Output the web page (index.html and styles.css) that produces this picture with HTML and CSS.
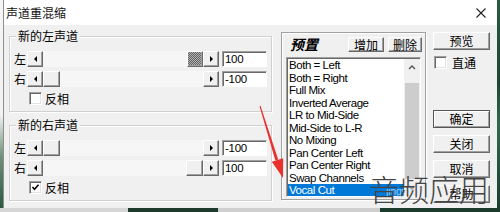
FILE: index.html
```html
<!DOCTYPE html>
<html lang="zh-CN">
<head>
<meta charset="utf-8">
<title>声道重混缩</title>
<link rel="stylesheet" href="styles.css">
</head>
<body>
<div class="screen">
  <div class="main">
    <div class="edge-left"></div>
    <div class="dialog">
      <div class="titlebar">
        <span class="title">声道重混缩</span>
        <svg class="close" viewBox="0 0 10 10"><path d="M0.5 0.5 L9.5 9.5 M9.5 0.5 L0.5 9.5" stroke="#222" stroke-width="1.1" fill="none"/></svg>
      </div>
      <div class="client">
        <div class="left-col">
          <div class="group">
            <span class="group-title">新的左声道</span>
            <div class="srow">
              <span class="chan">左</span>
              <div class="hscroll">
                <span class="sbtn"><i class="tri-l"></i></span>
                <span class="track at-max"><span class="thumb focused"></span></span>
                <span class="sbtn"><i class="tri-r"></i></span>
              </div>
              <span class="numbox">100</span>
            </div>
            <div class="srow">
              <span class="chan">右</span>
              <div class="hscroll">
                <span class="sbtn"><i class="tri-l"></i></span>
                <span class="track"><span class="thumb"></span></span>
                <span class="sbtn"><i class="tri-r"></i></span>
              </div>
              <span class="numbox">-100</span>
            </div>
            <div class="check invert"><span class="box"></span><span class="check-label">反相</span></div>
          </div>
          <div class="group">
            <span class="group-title">新的右声道</span>
            <div class="srow">
              <span class="chan">左</span>
              <div class="hscroll">
                <span class="sbtn"><i class="tri-l"></i></span>
                <span class="track"><span class="thumb"></span></span>
                <span class="sbtn"><i class="tri-r"></i></span>
              </div>
              <span class="numbox">-100</span>
            </div>
            <div class="srow">
              <span class="chan">右</span>
              <div class="hscroll">
                <span class="sbtn"><i class="tri-l"></i></span>
                <span class="track at-max"><span class="thumb"></span></span>
                <span class="sbtn"><i class="tri-r"></i></span>
              </div>
              <span class="numbox">100</span>
            </div>
            <div class="check invert"><span class="box"><svg class="tick" viewBox="0 0 9 9"><path d="M1.5 4 L3.5 6.2 L7.5 1.8" stroke="#000" stroke-width="1.6" fill="none"/></svg></span><span class="check-label">反相</span></div>
          </div>
        </div>

        <div class="presets">
          <div class="preset-head">
            <span class="preset-title">预置</span>
            <span class="pbtn add">增加</span>
            <span class="pbtn del">删除</span>
          </div>
          <div class="listbox">
            <div class="items">
              <div class="item">Both = Left</div>
              <div class="item">Both = Right</div>
              <div class="item">Full Mix</div>
              <div class="item">Inverted Average</div>
              <div class="item">LR to Mid-Side</div>
              <div class="item">Mid-Side to L-R</div>
              <div class="item">No Mixing</div>
              <div class="item">Pan Center Left</div>
              <div class="item">Pan Center Right</div>
              <div class="item">Swap Channels</div>
              <div class="item sel">Vocal Cut</div>
            </div>
            <div class="vscroll">
              <span class="vs-btn"><svg viewBox="0 0 8 5" class="chev"><path d="M1 4 L4 1 L7 4" stroke="#555" stroke-width="1.4" fill="none"/></svg></span>
              <span class="vs-gap"></span>
              <span class="vs-thumb"></span>
              <span class="vs-btn"><svg viewBox="0 0 8 5" class="chev"><path d="M1 1 L4 4 L7 1" stroke="#999" stroke-width="1.4" fill="none"/></svg></span>
            </div>
          </div>
        </div>

        <div class="right-col">
          <span class="btn">预览</span>
          <div class="check direct"><span class="box"></span><span class="check-label">直通</span></div>
          <span class="btn ok default">确定</span>
          <span class="btn">关闭</span>
          <span class="btn">取消</span>
          <span class="btn">帮助</span>
        </div>
      </div>
    </div>
    <div class="edge-right"></div>
  </div>
  <div class="bottom"></div>

  <svg class="arrow" viewBox="0 0 500 212">
    <polygon points="260.5,105.8 259.5,106.2 275.4,160.5 278.2,159.5" fill="#e8302c"/>
    <polygon points="283,178 271.8,161.8 283.2,158.2" fill="#e8302c"/>
  </svg>
  <span class="jingyan">jingyan</span>
  <span class="watermark">音频应用</span>
</div>
</body>
</html>
```

FILE: styles.css
```css
* { box-sizing: border-box; }
body { margin: 0; }

.screen {
  position: relative;
  width: 500px;
  height: 212px;
  overflow: hidden;
  font-family: "Noto Sans CJK SC", sans-serif;
  font-size: 12px;
  color: #000;
  background: #e8e8e8;
}

.main { display: flex; height: 208px; }

.edge-left {
  width: 3px;
  background: linear-gradient(#f5f5f5 0, #f3f3f3 55%, #6f9279 75%, #2b5940 100%);
}
.edge-right {
  width: 3px;
  background: linear-gradient(#2a5a44 0, #1d4535 40%, #2f6a50 60%, #1a3d2f 100%);
}

.dialog {
  width: 494px;
  display: flex;
  flex-direction: column;
  border-left: 1px solid #8e8e8e;
  background: #f0f0f0;
}

.titlebar {
  height: 25px;
  flex: none;
  background: #fff;
  display: flex;
  align-items: center;
  padding-left: 2px;
}
.title { font-size: 12px; line-height: 14px; color: #111; }
.close { margin-left: auto; margin-right: 11px; width: 10px; height: 10px; }

.client {
  flex: 1;
  display: flex;
  align-items: flex-start;
  padding-left: 5px;
}

/* left column */
.left-col { width: 263px; display: flex; flex-direction: column; }

.group {
  position: relative;
  margin-top: 11px;
  height: 76px;
  border: 1px solid #d0d0d0;
  box-shadow: inset 1px 1px 0 #fff, 1px 1px 0 #fff;
  padding: 14px 3px 0 4px;
  display: flex;
  flex-direction: column;
  gap: 4px;
}
.group + .group { margin-top: 13px; }

.group-title {
  position: absolute;
  top: -8px;
  left: 6px;
  padding: 0 2px;
  background: #f0f0f0;
  line-height: 14px;
}

.srow { display: flex; align-items: center; height: 16px; }
.chan { width: 13px; line-height: 14px; }

.hscroll { width: 192px; height: 16px; display: flex; flex: none; }

.sbtn, .thumb {
  width: 16px;
  height: 16px;
  flex: none;
  display: flex;
  align-items: center;
  justify-content: center;
  background: #f0f0f0;
  border-top: 1px solid #fff;
  border-left: 1px solid #fff;
  border-right: 1px solid #696969;
  border-bottom: 1px solid #696969;
  box-shadow: inset -1px -1px 0 #a0a0a0;
}
.thumb { width: 17px; }
.thumb.focused {
  width: 16px;
  background: repeating-conic-gradient(#606060 0 25%, #b4b4b4 0 50%) 0 0 / 2px 2px;
}

.tri-l, .tri-r { display: block; width: 0; height: 0; border-top: 3px solid transparent; border-bottom: 3px solid transparent; }
.tri-l { border-right: 3px solid #000; }
.tri-r { border-left: 3px solid #000; }

.track { flex: 1; display: flex; background: #f6f6f6; }
.track.at-max { justify-content: flex-end; }

.numbox {
  margin-left: 3px;
  width: 45px;
  height: 16px;
  background: #fff;
  border-top: 1px solid #a0a0a0;
  border-left: 1px solid #a0a0a0;
  border-right: 1px solid #fff;
  border-bottom: 1px solid #fff;
  box-shadow: inset 1px 1px 0 #696969;
  font-family: "Liberation Sans", sans-serif;
  font-size: 11.5px;
  letter-spacing: -0.3px;
  line-height: 14px;
  padding-left: 2px;
}

.check { display: flex; align-items: center; height: 13px; }
.check.invert { margin: 1px 0 0 15px; gap: 3px; }
.check.direct { margin: 6px 0 0 1px; gap: 5px; }
.check-label { line-height: 14px; }

.box {
  width: 13px;
  height: 13px;
  flex: none;
  background: #fff;
  border-top: 1px solid #a0a0a0;
  border-left: 1px solid #a0a0a0;
  border-right: 1px solid #fff;
  border-bottom: 1px solid #fff;
  box-shadow: inset 1px 1px 0 #696969, inset -1px -1px 0 #e3e3e3;
  display: flex;
  align-items: center;
  justify-content: center;
}
.tick { width: 9px; height: 9px; }

/* presets */
.presets {
  margin-left: 9px;
  margin-top: 7px;
  width: 145px;
  height: 168px;
  border: 1px solid #a0a0a0;
  box-shadow: inset 1px 1px 0 #fff, 1px 1px 0 #fff;
  padding: 4px 3px 0 4px;
  display: flex;
  flex-direction: column;
}
.preset-head { display: flex; align-items: center; height: 15px; gap: 4px; }
.preset-title {
  margin-left: 4px;
  margin-right: auto;
  font-weight: 700;
  font-style: italic;
  font-size: 14px;
  line-height: 15px;
}
.pbtn {
  height: 15px;
  display: flex;
  align-items: center;
  justify-content: center;
  line-height: 13px;
  background: #f0f0f0;
  border-top: 1px solid #fff;
  border-left: 1px solid #fff;
  border-right: 1px solid #696969;
  border-bottom: 1px solid #696969;
  box-shadow: inset -1px -1px 0 #a0a0a0;
}
.pbtn.add { width: 36px; }
.pbtn.del { width: 34px; }

.listbox {
  margin-top: 5px;
  width: 135px;
  height: 140px;
  display: flex;
  background: #fff;
  border-top: 1px solid #a0a0a0;
  border-left: 1px solid #a0a0a0;
  border-right: 1px solid #fff;
  border-bottom: 1px solid #fff;
  box-shadow: inset 1px 1px 0 #696969;
  padding: 1px 0 0 1px;
}
.items {
  flex: 1;
  overflow: hidden;
  font-family: "Liberation Sans", sans-serif;
  font-size: 11.5px;
  letter-spacing: -0.45px;
}
.item { height: 12.5px; line-height: 12.5px; padding-left: 1px; white-space: nowrap; }
.item.sel { background: #0078d7; color: #fff; }

.vscroll { width: 16px; flex: none; display: flex; flex-direction: column; background: #f0f0f0; }
.vs-btn { height: 17px; flex: none; display: flex; align-items: center; justify-content: center; }
.chev { width: 8px; height: 5px; }
.vs-gap { height: 7px; flex: none; }
.vs-thumb { flex: 1; margin: 0 1px; background: #cdcdcd; }

/* right column */
.right-col { margin-left: 7px; margin-top: 7px; width: 57px; display: flex; flex-direction: column; }
.btn {
  height: 18px;
  display: flex;
  align-items: center;
  justify-content: center;
  line-height: 14px;
  background: #f0f0f0;
  border-top: 1px solid #fff;
  border-left: 1px solid #fff;
  border-right: 1px solid #696969;
  border-bottom: 1px solid #696969;
  box-shadow: inset -1px -1px 0 #a0a0a0;
}
.btn + .btn { margin-top: 7px; }
.btn.ok { margin-top: 41px; }
.btn.default {
  border: 1px solid #555;
  box-shadow: inset 1px 1px 0 #fff, inset -1px -1px 0 #a0a0a0;
}

.bottom {
  height: 4px;
  background: linear-gradient(90deg, #d6d6d6 0 128px, #1d3a2c 128px 218px, #cfcfcf 218px 380px, #1c3b2d 380px 500px);
}

/* overlays */
.arrow { position: absolute; left: 0; top: 0; width: 500px; height: 212px; pointer-events: none; }
.jingyan {
  position: absolute;
  left: 386px;
  top: 186px;
  font-family: "Liberation Sans", sans-serif;
  font-size: 10px;
  line-height: 12px;
  color: rgba(215, 225, 240, 0.8);
}
.watermark {
  position: absolute;
  left: 369px;
  top: 172px;
  font-size: 30px;
  line-height: 32px;
  font-weight: 300;
  color: #444;
}
```
